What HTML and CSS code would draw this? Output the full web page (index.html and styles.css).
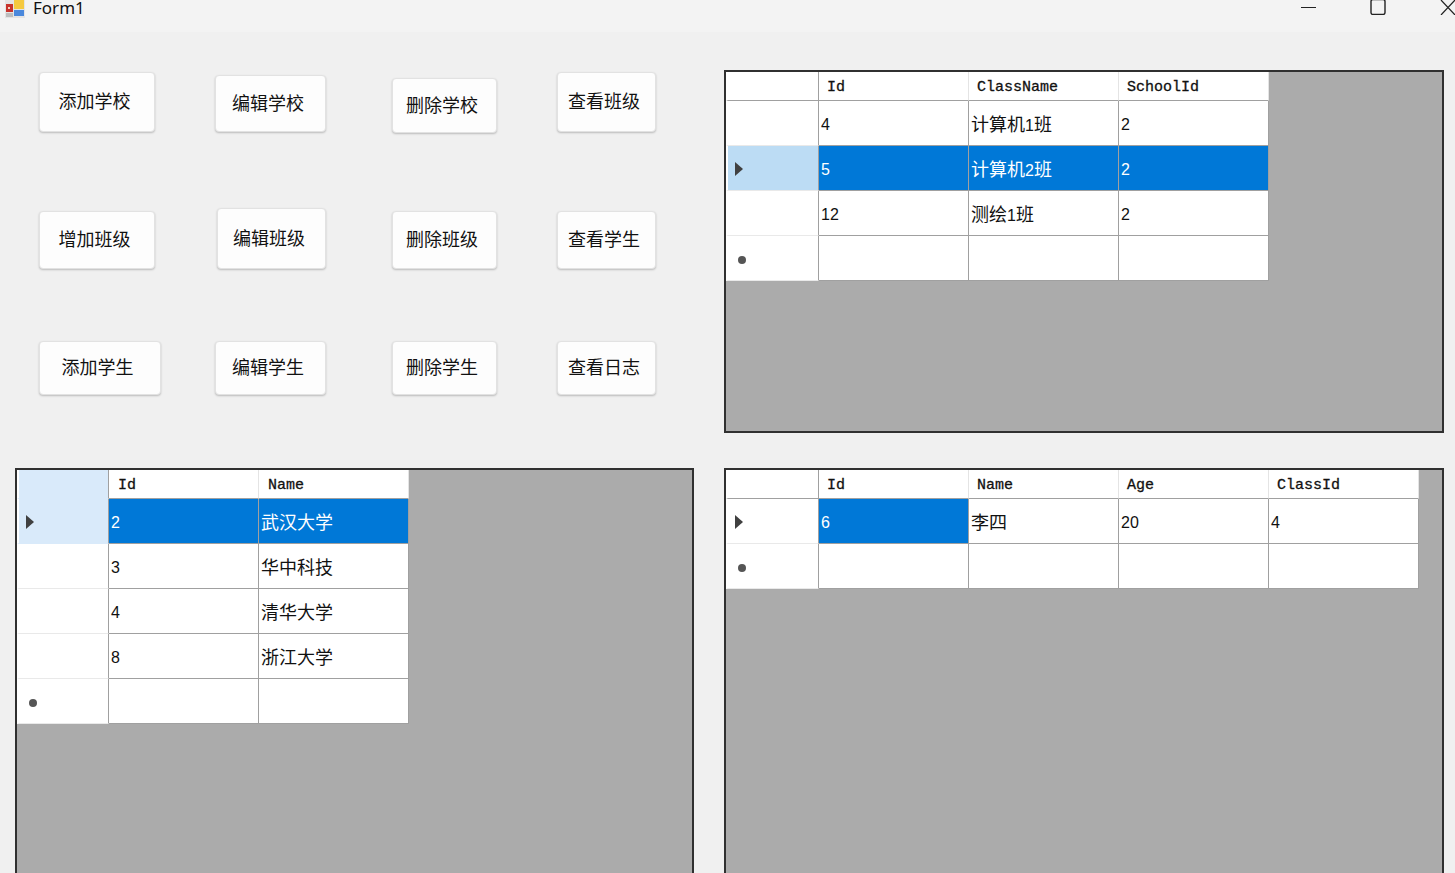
FILE: index.html
```html
<!DOCTYPE html>
<html lang="zh">
<head>
<meta charset="utf-8">
<title>Form1</title>
<link rel="stylesheet" href="styles.css">
</head>
<body>
<div class="window">
  <header class="titlebar">
    <svg class="app-icon" width="20" height="18" viewBox="0 0 20 18">
      <rect x="0" y="0" width="20" height="18" fill="#e4e4e4"/>
      <rect x="1" y="4" width="7" height="8" fill="#c8332c"/>
      <rect x="3" y="7" width="2" height="2" fill="#f4d0c0"/>
      <rect x="9" y="0" width="10" height="9" fill="#f5c93f"/>
      <rect x="9" y="10" width="10" height="6" fill="#4a88dc"/>
      <rect x="1" y="13" width="7" height="4" fill="#bdbdbd"/>
    </svg>
    <span class="title">Form1</span>
    <div class="controls">
      <svg class="ctl ctl-min" width="16" height="15" viewBox="0 0 16 15"><path d="M1 7.5H16" stroke="#222" fill="none"/></svg>
      <svg class="ctl ctl-max" width="16" height="15" viewBox="0 0 16 15"><rect x="1" y="-.5" width="14" height="15" rx="2" stroke="#222" stroke-width="1.4" fill="none"/></svg>
      <svg class="ctl ctl-close" width="15" height="15" viewBox="0 0 15 15"><path d="M1 0L15 15M15 0L1 15" stroke="#222" stroke-width="1.2" fill="none"/></svg>
    </div>
  </header>

  <main class="body">
    <div class="top">
      <section class="buttons">
        <div class="btn-row row-1">
          <button class="btn w116 h60">添加学校</button>
          <button class="btn w111 h57 down3">编辑学校</button>
          <button class="btn w105 h55 down6">删除学校</button>
          <button class="btn w99 h60">查看班级</button>
        </div>
        <div class="btn-row row-2">
          <button class="btn w116 h58 down3">增加班级</button>
          <button class="btn w109 h61 right2">编辑班级</button>
          <button class="btn w105 h58 down3">删除班级</button>
          <button class="btn w99 h58 down3">查看学生</button>
        </div>
        <div class="btn-row row-3">
          <button class="btn w122 h54">添加学生</button>
          <button class="btn w111 h54">编辑学生</button>
          <button class="btn w105 h54">删除学生</button>
          <button class="btn w99 h54">查看日志</button>
        </div>
      </section>

      <section class="panel panel-top">
        <div class="dgv">
          <div class="dgv-row head">
            <div class="rh"></div>
            <div class="hc">Id</div><div class="hc">ClassName</div><div class="hc">SchoolId</div>
          </div>
          <div class="dgv-row">
            <div class="rh"></div>
            <div class="c num">4</div><div class="c">计算机<span class="lat">1</span>班</div><div class="c num">2</div>
          </div>
          <div class="dgv-row">
            <div class="rh rh-sel"><span class="arrow"></span></div>
            <div class="c num sel">5</div><div class="c sel">计算机<span class="lat">2</span>班</div><div class="c num sel">2</div>
          </div>
          <div class="dgv-row">
            <div class="rh"></div>
            <div class="c num">12</div><div class="c">测绘<span class="lat">1</span>班</div><div class="c num">2</div>
          </div>
          <div class="dgv-row">
            <div class="rh"><span class="star"></span></div>
            <div class="c"></div><div class="c"></div><div class="c"></div>
          </div>
        </div>
      </section>
    </div>

    <div class="bottom">
      <section class="panel panel-left">
        <div class="dgv">
          <div class="dgv-row head">
            <div class="rh rh-active"></div>
            <div class="hc">Id</div><div class="hc">Name</div>
          </div>
          <div class="dgv-row">
            <div class="rh rh-active"><span class="arrow"></span></div>
            <div class="c num sel">2</div><div class="c sel">武汉大学</div>
          </div>
          <div class="dgv-row">
            <div class="rh"></div>
            <div class="c num">3</div><div class="c">华中科技</div>
          </div>
          <div class="dgv-row">
            <div class="rh"></div>
            <div class="c num">4</div><div class="c">清华大学</div>
          </div>
          <div class="dgv-row">
            <div class="rh"></div>
            <div class="c num">8</div><div class="c">浙江大学</div>
          </div>
          <div class="dgv-row">
            <div class="rh"><span class="star"></span></div>
            <div class="c"></div><div class="c"></div>
          </div>
        </div>
      </section>

      <section class="panel panel-right">
        <div class="dgv">
          <div class="dgv-row head">
            <div class="rh"></div>
            <div class="hc">Id</div><div class="hc">Name</div><div class="hc">Age</div><div class="hc">ClassId</div>
          </div>
          <div class="dgv-row">
            <div class="rh"><span class="arrow"></span></div>
            <div class="c num sel">6</div><div class="c">李四</div><div class="c num">20</div><div class="c num">4</div>
          </div>
          <div class="dgv-row">
            <div class="rh"><span class="star"></span></div>
            <div class="c"></div><div class="c"></div><div class="c"></div><div class="c"></div>
          </div>
        </div>
      </section>
    </div>
  </main>
</div>
</body>
</html>
```

FILE: styles.css
```css
* { box-sizing: border-box; }

html, body {
  margin: 0;
  padding: 0;
  height: 100%;
  overflow: hidden;
}

.window {
  display: flex;
  flex-direction: column;
  width: 1455px;
  height: 873px;
  overflow: hidden;
  background: #f0f0f0;
  font-family: "Noto Sans CJK SC", sans-serif;
}

/* Title bar */
.titlebar {
  display: flex;
  align-items: flex-start;
  flex: none;
  height: 32px;
  background: #f3f3f3;
  overflow: hidden;
}

.app-icon { flex: none; margin-left: 5px; }

.title {
  margin-left: 8px;
  font: 17px/16px "Noto Sans", sans-serif;
  color: #111;
}

.controls {
  display: flex;
  margin-left: auto;
}

.ctl { display: block; flex: none; }
.ctl-min { margin-right: 54px; }
.ctl-max { margin-right: 54px; }

/* Layout */
.body {
  display: flex;
  flex-direction: column;
  flex: 1;
  min-height: 0;
}

.top {
  display: flex;
  flex: none;
  height: 401px;
  padding-top: 38px;
}

.bottom {
  display: flex;
  flex: 1;
  min-height: 0;
  padding: 35px 11px 0 15px;
  gap: 30px;
}

/* Buttons */
.buttons {
  flex: none;
  width: 724px;
  padding: 2px 0 0 39px;
}

.btn-row {
  display: grid;
  grid-template-columns: 176px 177px 165px 99px;
  align-items: start;
}

.row-1 { height: 136px; }
.row-2 { height: 133px; }
.row-3 { height: 54px; }

.btn {
  display: block;
  padding: 0 5px 4px 0;
  background: #fdfdfd;
  border: 1px solid #e2e2e2;
  border-radius: 4px;
  box-shadow: 0 1px 2px rgba(0, 0, 0, .22);
  color: #111;
  font: 18px/1 "Noto Sans CJK SC", sans-serif;
}

.w99 { width: 99px; }
.w105 { width: 105px; }
.w109 { width: 109px; }
.w111 { width: 111px; }
.w116 { width: 116px; }
.w122 { width: 122px; }
.h54 { height: 54px; }
.h55 { height: 55px; }
.h57 { height: 57px; }
.h58 { height: 58px; }
.h60 { height: 60px; }
.h61 { height: 61px; }
.down3 { margin-top: 3px; }
.down6 { margin-top: 6px; }
.right2 { margin-left: 2px; }

/* Data grids */
.panel {
  background: #ababab;
  border: 2px solid #303030;
  overflow: hidden;
}

.panel-top {
  flex: none;
  width: 720px;
  height: 363px;
}

.panel-left {
  flex: none;
  width: 679px;
  margin-bottom: -4px;
  border-bottom: 0;
}

.panel-right {
  flex: none;
  width: 720px;
  margin-bottom: -4px;
  border-bottom: 0;
}

.dgv { display: inline-block; vertical-align: top; }

.dgv-row {
  display: flex;
  height: 45px;
}

.dgv-row.head { height: 29px; }

.rh {
  display: flex;
  align-items: center;
  flex: none;
  width: 92px;
  padding: 2px 0 0 7px;
  background: #fff;
  border-left: 2px solid #fff;
  border-right: 1px solid #a0a0a0;
  border-bottom: 1px solid #e9e9e9;
}

.panel-top .rh,
.panel-right .rh { width: 93px; }

.head .rh { border-bottom-color: #a0a0a0; }
.rh-sel { background: #bcdcf4; }
.rh-active { background: #d9eafa; border-bottom-color: #d9eafa; }
.head .rh-active { border-bottom-color: #d9eafa; }

.arrow {
  width: 0;
  height: 0;
  border-top: 7px solid transparent;
  border-bottom: 7px solid transparent;
  border-left: 8px solid #404040;
}

.star {
  width: 8px;
  height: 8px;
  margin: 2px 0 0 3px;
  border-radius: 50%;
  background: #555;
}

.hc {
  flex: none;
  width: 150px;
  padding: 3px 0 0 9px;
  background: #fff;
  border-right: 1px solid #e4e4e4;
  border-bottom: 1px solid #a0a0a0;
  color: #111;
  font: 15px/26px "Liberation Mono", monospace;
  -webkit-text-stroke: .3px #111;
}

.panel-top .hc,
.panel-right .hc { padding-left: 8px; }

.c {
  flex: none;
  width: 150px;
  padding-left: 2px;
  background: #fff;
  border-right: 1px solid #a0a0a0;
  border-bottom: 1px solid #a0a0a0;
  color: #111;
  font: 18px/44px "Noto Sans CJK SC", sans-serif;
}

.c.num {
  padding-top: 2px;
  font: 16px/44px "Liberation Sans", sans-serif;
}

.c.sel {
  background: #0078d7;
  color: #fff;
}

.lat { font: 16px "Liberation Sans", sans-serif; }
```
